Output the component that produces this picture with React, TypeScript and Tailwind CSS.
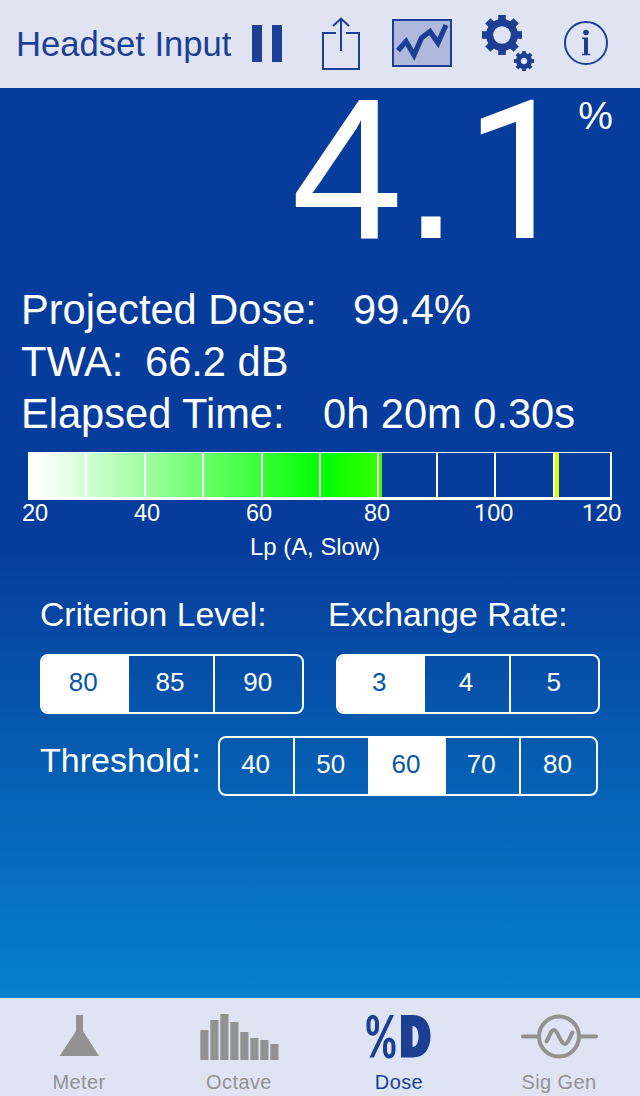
import React, { useState } from 'react';

const sans = "font-['Liberation_Sans',Arial,sans-serif]";

const ShareIcon = () => (
  <svg width="40" height="56" viewBox="0 0 40 56" fill="none" stroke="#1c3f94" strokeWidth="2">
    <path d="M16 17H3V53H39V17H26" />
    <path d="M21 35V3M13 10L21 2.5L29 10" />
  </svg>
);

const ChartIcon = () => (
  <svg width="60" height="48" viewBox="0 0 60 48" fill="none" stroke="#1c3f94">
    <rect x="1" y="1" width="58" height="46" fill="#afb9dc" strokeWidth="2" />
    <path d="M6 31.500L14 22.500L22 36L29.500 19L38 12.500L46 24L54 6" strokeWidth="5.2" />
  </svg>
);

interface GearProps {
  cx: number;
  cy: number;
  scale: number;
  hole: number;
}

// Eight square teeth around a ring
const Gear: React.FC<GearProps> = ({ cx, cy, scale, hole }) => (
  <g transform={`translate(${cx} ${cy}) scale(${scale})`}>
    <circle r={(16 + hole) / 2} fill="none" stroke="#1c3f94" strokeWidth={16 - hole} />
    {[0, 45, 90, 135, 180, 225, 270, 315].map((angle) => (
      <rect key={angle} x="-3.8" y="-20" width="7.6" height="7" fill="#1c3f94" transform={`rotate(${angle})`} />
    ))}
  </g>
);

const GearsIcon = () => (
  <svg width="54" height="58" viewBox="0 0 54 58">
    <Gear cx={20} cy={21} scale={1} hole={8.8} />
    <Gear cx={42} cy={47} scale={0.5} hole={6.4} />
  </svg>
);

const InfoIcon = () => (
  <svg width="44" height="44" viewBox="0 0 44 44">
    <circle cx="22" cy="22" r="21" fill="none" stroke="#1c3f94" strokeWidth="2" />
    <circle cx="22" cy="11.5" r="2.8" fill="#1c3f94" />
    <path d="M18 16.500H24V32.800H26.200V34.200H18V32.800H20V18H18Z" fill="#1c3f94" />
  </svg>
);

const MeterIcon = () => (
  <svg width="80" height="46" viewBox="0 0 80 46">
    <path d="M37 1H44V17L60 42H20.500L37 17Z" fill="#929292" />
  </svg>
);

const OctaveIcon = () => (
  <svg width="80" height="46" viewBox="0 0 80 46" fill="#929292">
    {[30, 40, 46, 38, 28, 22, 20, 16].map((height, i) => (
      <rect key={i} x={1.3 + i * 10} y={46 - height} width="8.2" height={height} />
    ))}
  </svg>
);

const DoseIcon = () => (
  <svg width="80" height="46" viewBox="0 0 80 46" fill="none" stroke="#1c3f94">
    <rect x="9.5" y="2.800" width="8.500" height="17" rx="4.200" ry="6" strokeWidth="4" />
    <rect x="26" y="25.500" width="8.500" height="17" rx="4.200" ry="6" strokeWidth="4" />
    <path d="M10.500 43.500H14.800L35 1H30.700Z" fill="#1c3f94" stroke="none" />
    <path
      d="M42 1H54C65 1 71.500 9 71.500 22S65 43.500 54 43.500H42ZM53.500 12V33C57 33 59.500 29 59.500 22.500S57 12 53.500 12Z"
      fill="#1c3f94"
      fillRule="evenodd"
      stroke="none"
    />
  </svg>
);

const SigGenIcon = () => (
  <svg width="80" height="46" viewBox="0 0 80 46" fill="none" stroke="#929292" strokeWidth="4" strokeLinecap="round">
    <circle cx="40" cy="22.500" r="20" />
    <path d="M4 22.500H19M61 22.500H77" />
    <path d="M27.500 27.500C31 21 32 16 35 16C39 16 41 30 46 30C49 30 51 23 53.500 18.500" />
  </svg>
);

const tabs = [
  { name: 'Meter', icon: <MeterIcon /> },
  { name: 'Octave', icon: <OctaveIcon /> },
  { name: 'Dose', icon: <DoseIcon /> },
  { name: 'Sig Gen', icon: <SigGenIcon /> },
];

const One = () => <span className="font-[Roboto]">1</span>;

interface SegmentedProps {
  options: number[];
  initial: number;
  className: string;
}

const Segmented: React.FC<SegmentedProps> = ({ options, initial, className }) => {
  const [selected, setSelected] = useState(initial);

  return (
    <div className={`grid h-[60px] auto-cols-fr grid-flow-col overflow-hidden rounded-lg border-2 border-white ${className}`}>
      {options.map((option, i) => (
        <button
          key={option}
          onClick={() => setSelected(option)}
          className={`pb-1 pr-0.5 text-[26px] leading-none ${i < options.length - 1 ? 'border-r-2 border-white' : ''} ${
            option === selected ? 'bg-white text-[#0855aa]' : 'text-white'
          }`}
        >
          {option}
        </button>
      ))}
    </div>
  );
};

const Header = () => (
  <header className="flex h-[88px] items-start bg-[#e0e4f2] text-[#1c3f94]">
    <h1 className="ml-4 mt-6 w-[236px] whitespace-pre text-[34.600px] leading-[40px]">Headset Input</h1>
    <div className="mt-[25px] flex gap-2.5">
      <div className="h-[37px] w-2.5 bg-[#1c3f94]" />
      <div className="h-[37px] w-2.5 bg-[#1c3f94]" />
    </div>
    <div className="ml-[38px] mt-4"><ShareIcon /></div>
    <div className="ml-8 mt-[19px]"><ChartIcon /></div>
    <div className="ml-[30px] mt-[14px]"><GearsIcon /></div>
    <div className="ml-[28px] mt-[21px]"><InfoIcon /></div>
  </header>
);

const LevelBar = () => (
  <div className="ml-7 mt-3 w-[584px]">
    <div className="relative flex h-12 border-2 border-b-[3px] border-t border-white">
      <div className="absolute inset-y-0 left-0 w-[352px] bg-linear-to-r/srgb from-white from-2% via-[#00ff00] via-83% to-[#38ff00]" />
      <div className="absolute inset-y-0 left-[525px] w-1 bg-[#d8ff00]" />
      {[...Array(9).keys()].map((i) => (
        <div key={i} className={`relative shrink-0 border-r-2 border-white ${i === 0 ? 'w-[57.400px]' : 'w-[58.400px]'}`} />
      ))}
    </div>
    <div className="-ml-1.5 flex h-[27px] w-[600px] justify-between text-[23.500px] leading-[27px]">
      <span className="w-[112px]">20</span>
      <span className="w-[112px]">40</span>
      <span className="w-[118px]">60</span>
      <span className="w-[110px]">80</span>
      <span className="w-[108px]"><One />00</span>
      <span className="w-[40px]"><One />20</span>
    </div>
  </div>
);

const App: React.FC = () => {
  return (
    <div className={`flex h-[1096px] w-[640px] flex-col overflow-hidden text-white ${sans}`}>
      <Header />

      <main className="flex-1 bg-linear-to-b/srgb from-[#063c9b] from-50% to-[#0581cb]">
        <div className="flex h-[196px] justify-end pr-[27px]">
          <div className="mr-[5px] mt-[-9px] flex items-baseline text-[201px] leading-[180px]">
            <span>4.</span>
            <span className="ml-1.5 text-[193px] font-[Roboto]">1</span>
          </div>
          <span className="mt-[5px] text-[39px] leading-[46px]">%</span>
        </div>

        <div className="pl-[21px] text-[41.600px] leading-[52px]">
          <p className="flex"><span className="w-[332px]">Projected Dose:</span><span>99.4%</span></p>
          <p className="flex"><span className="w-[124px]">TWA:</span><span>66.2 dB</span></p>
          <p className="flex"><span className="w-[302px]">Elapsed Time:</span><span>0h 20m 0.30s</span></p>
        </div>

        <LevelBar />
        <p className="mt-1.5 pl-[250px] text-[23.900px] leading-[27px]">Lp (A, Slow)</p>

        <div className="mt-[34px] flex pl-10 text-[33.700px] leading-[40px]">
          <span className="w-[288px]">Criterion Level:</span>
          <span>Exchange Rate:</span>
        </div>
        <div className="mt-[20px] flex gap-8 pl-10">
          <Segmented options={[80, 85, 90]} initial={80} className="w-[264px]" />
          <Segmented options={[3, 4, 5]} initial={3} className="w-[264px]" />
        </div>
        <div className="mt-[22px] flex pl-10">
          <span className="mt-1 w-[178px] text-[34px] leading-[40px]">Threshold:</span>
          <Segmented options={[40, 50, 60, 70, 80]} initial={60} className="w-[380px]" />
        </div>
      </main>

      <nav className="flex h-[98px] bg-[#dfe4f5] pr-0.5">
        {tabs.map(({ name, icon }) => (
          <div
            key={name}
            className={`-ml-px mr-px flex w-40 shrink-0 flex-col items-center pt-4 ${name === 'Dose' ? 'text-[#1c3f94]' : 'text-[#929292]'}`}
          >
            {icon}
            <span className="mt-[10px] text-xl leading-6 tracking-[0.4px]">{name}</span>
          </div>
        ))}
      </nav>
    </div>
  );
};

export default App;
